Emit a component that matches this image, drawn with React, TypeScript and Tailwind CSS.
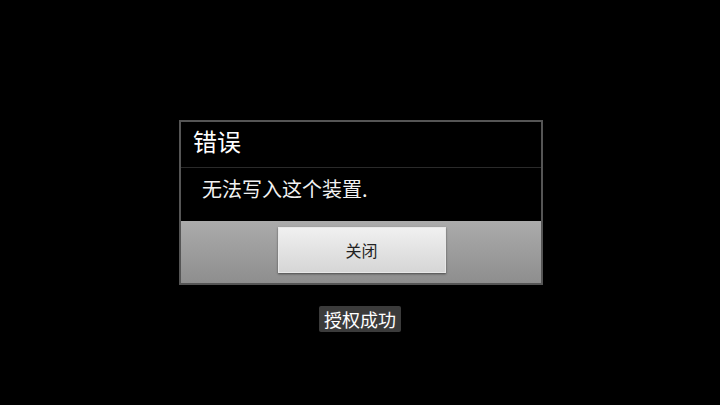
export default function App() {
  const font = { fontFamily: '"Noto Sans CJK SC", "Liberation Sans", sans-serif' };
  return (
    <div className="w-[720px] h-[405px] bg-black flex flex-col items-center pt-[120px]" style={font}>
      <div className="w-[364px] h-[165px] ml-[2px] border-2 border-[#555555] bg-black flex flex-col">
        <div className="h-[46px] flex items-center pl-[12px] pb-[7px] border-b border-[#2a2a2a]">
          <span className="text-[24px] leading-none text-white">错误</span>
        </div>
        <div className="flex-1 flex items-center pl-[21px] pb-[11px]">
          <span className="text-[20px] leading-none text-[#f2f2f2]">无法写入这个装置.</span>
        </div>
        <div className="h-[62px] bg-gradient-to-b from-[#ababab] to-[#8e8e8e] flex justify-center pt-[6px]">
          <div className="w-[168px] h-[46px] ml-[1px] bg-gradient-to-b from-[#f0f0f0] to-[#d6d6d6] border border-[#e8e8e8] shadow-[0_1px_2px_rgba(0,0,0,0.5)] flex items-center justify-center">
            <span className="text-[16px] text-[#222222] leading-none">关闭</span>
          </div>
        </div>
      </div>
      <div className="mt-[21px] h-[26px] px-[5px] bg-[#3b3b3b] rounded-[2px] flex items-center">
        <span className="text-[18px] leading-none text-white">授权成功</span>
      </div>
    </div>
  );
}
